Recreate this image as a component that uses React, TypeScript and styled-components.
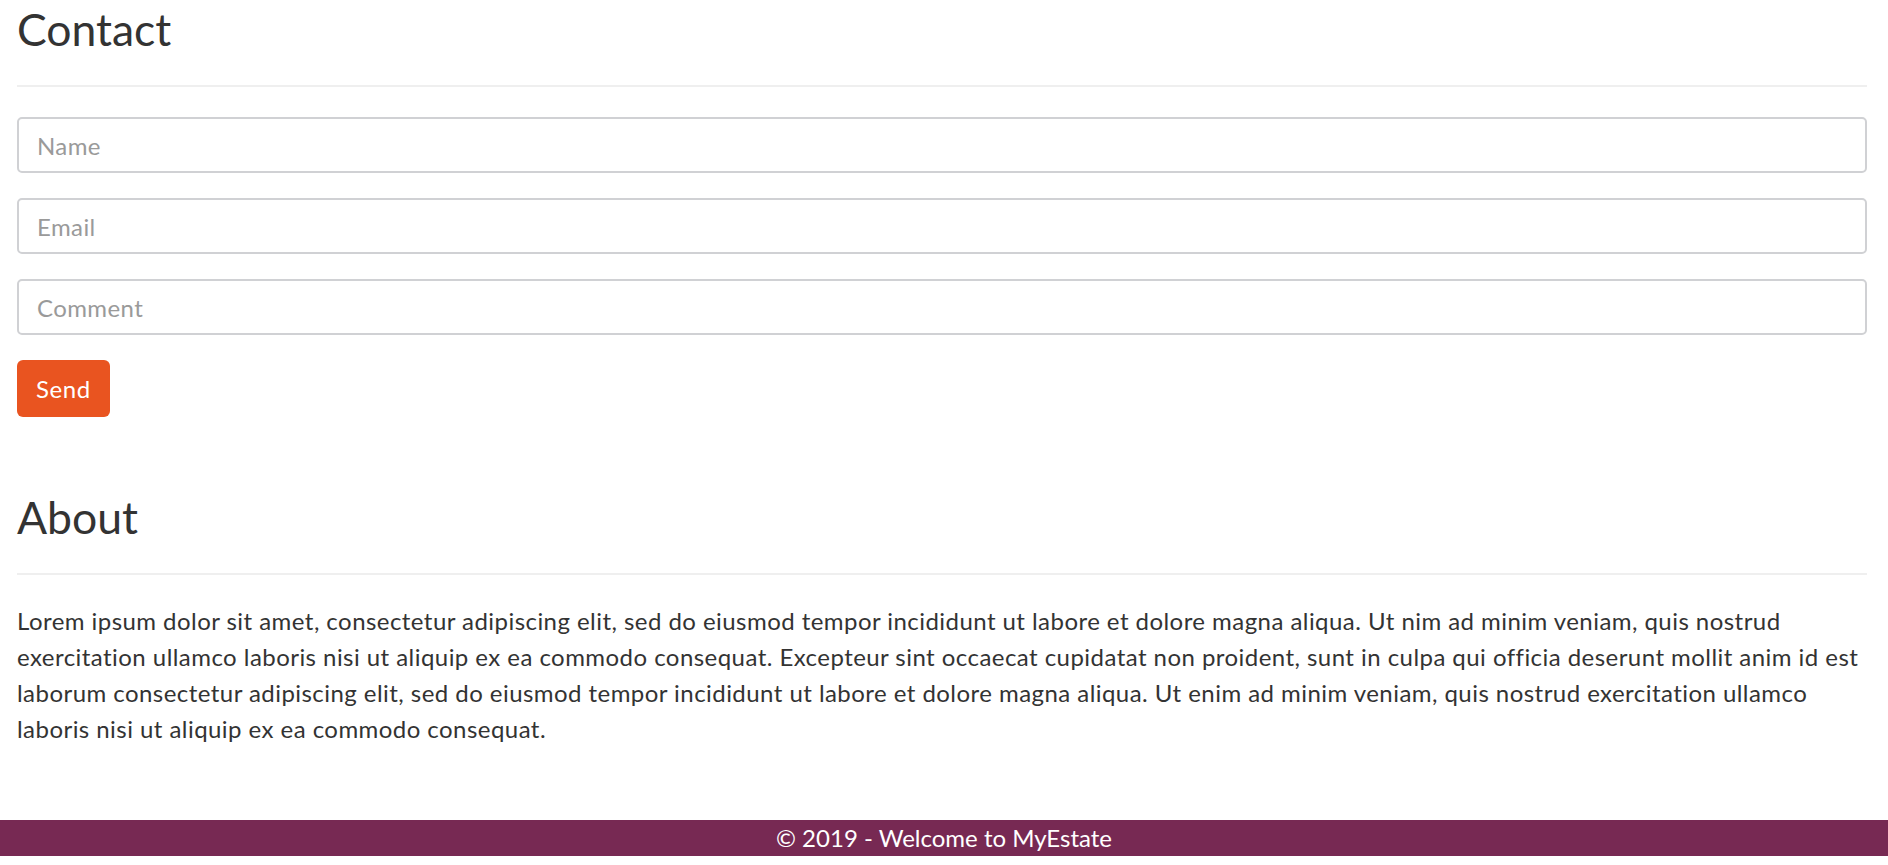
import styled, { createGlobalStyle } from "styled-components";

const GlobalStyle = createGlobalStyle`
  html, body {
    margin: 0;
    padding: 0;
    background: #fff;
  }
  body {
    font-family: Lato, "Open Sans", sans-serif;
    color: #333;
  }
  * {
    box-sizing: border-box;
  }
`;

const Page = styled.div`
  display: flex;
  flex-direction: column;
  min-height: 865px;
`;

const Main = styled.main`
  flex: 1;
  padding: 0 21px 0 17px;
`;

const Section = styled.section<{ top?: number }>`
  margin-top: ${(p) => p.top ?? 0}px;
`;

const Heading = styled.h2`
  margin: 0;
  font-size: 44.5px;
  line-height: 57px;
  font-weight: 400;
  color: #333;
`;

const Divider = styled.hr`
  margin: 28px 0 0;
  border: 0;
  height: 2px;
  background: #efefef;
`;

const Form = styled.form`
  display: flex;
  flex-direction: column;
  align-items: flex-start;
  gap: 25px;
  margin-top: 30px;
`;

const Field = styled.input`
  width: 100%;
  height: 56px;
  padding: 0 18px;
  border: 2px solid #d0d1d4;
  border-radius: 5px;
  font-family: inherit;
  font-size: 24px;
  letter-spacing: 0.4px;
  color: #333;
  background: #fff;
  outline: none;

  &::placeholder {
    color: #9a9a9a;
  }
`;

const SendButton = styled.button`
  height: 57px;
  padding: 0 19px;
  border: 0;
  border-radius: 6px;
  background: #e95420;
  color: #fff;
  font-family: inherit;
  font-size: 24px;
  line-height: 36px;
  letter-spacing: 0.6px;
  cursor: pointer;
`;

const Text = styled.p`
  margin: 28px 0 0;
  font-size: 24px;
  line-height: 36px;
  letter-spacing: 0.45px;
  color: #333;
`;

const Footer = styled.footer`
  margin-bottom: 9px;
  height: 36px;
  background: #772953;
  color: #fff;
  font-size: 24px;
  line-height: 36px;
  text-align: center;
`;

const about =
  "Lorem ipsum dolor sit amet, consectetur adipiscing elit, sed do eiusmod tempor incididunt ut labore et dolore magna aliqua. Ut nim ad minim veniam, quis nostrud exercitation ullamco laboris nisi ut aliquip ex ea commodo consequat. Excepteur sint occaecat cupidatat non proident, sunt in culpa qui officia deserunt mollit anim id est laborum consectetur adipiscing elit, sed do eiusmod tempor incididunt ut labore et dolore magna aliqua. Ut enim ad minim veniam, quis nostrud exercitation ullamco laboris nisi ut aliquip ex ea commodo consequat.";

export default function App() {
  return (
    <>
      <GlobalStyle />
      <Page>
        <Main>
          <Section>
            <Heading>Contact</Heading>
            <Divider />
            <Form onSubmit={(e) => e.preventDefault()}>
              <Field type="text" placeholder="Name" />
              <Field type="email" placeholder="Email" />
              <Field type="text" placeholder="Comment" />
              <SendButton type="submit">Send</SendButton>
            </Form>
          </Section>

          <Section top={71}>
            <Heading>About</Heading>
            <Divider />
            <Text>{about}</Text>
          </Section>
        </Main>
        <Footer>© 2019 - Welcome to MyEstate</Footer>
      </Page>
    </>
  );
}
